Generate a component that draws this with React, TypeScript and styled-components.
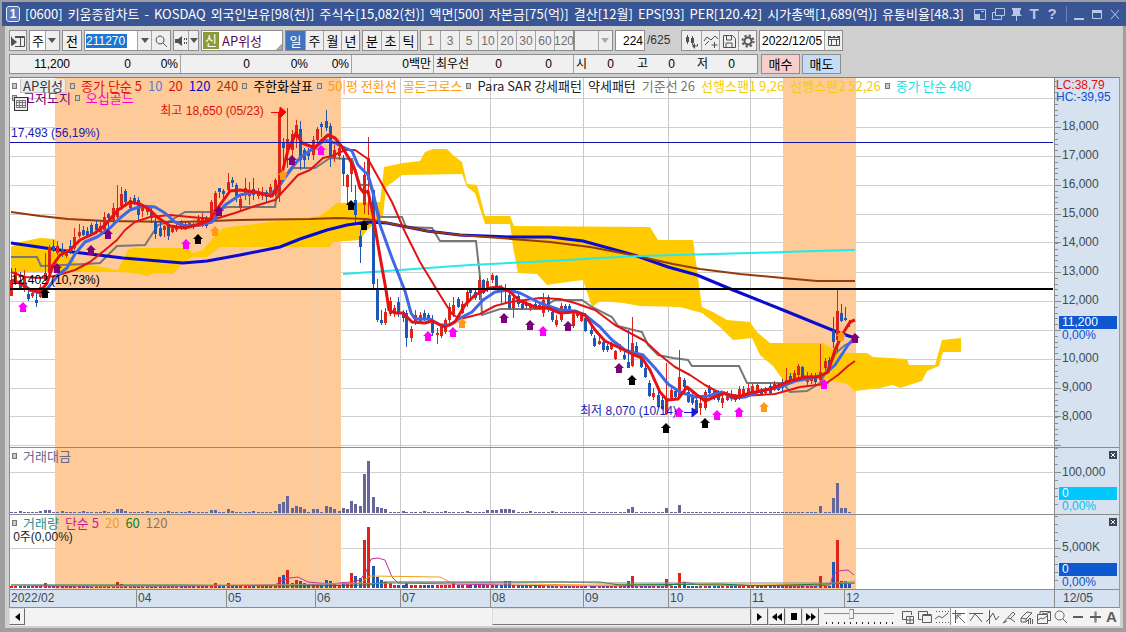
import React from "react";
import styled, { createGlobalStyle } from "styled-components";

const NUMERIC = `"Liberation Sans", "Noto Sans CJK KR", sans-serif`;

const Global = createGlobalStyle`
  * { box-sizing: border-box; }
  body { margin: 0; background: #9f9f9f; }
  body, button, input, select {
    font-family: "Noto Sans CJK KR", sans-serif;
    font-size: 13px;
    line-height: 16px;
    color: #000;
  }
  button, input, select { margin: 0; padding: 0; border: 0; border-radius: 0; background: none; outline: none; }
`;

/* ---------- window frame ---------- */
const Window = styled.main`
  min-width: 1100px;
  padding-top: 2px;
  background: #9f9f9f;
`;
const TitleBar = styled.header`
  display: flex;
  align-items: center;
  height: 24px;
  margin-left: 2px;
  padding: 0 2px 0 4px;
  background: #3a5594;
  color: #fff;
`;
const WindowNumber = styled.span`
  width: 14px;
  height: 16px;
  margin-right: 5px;
  border: 1px solid #e8edf8;
  border-radius: 3px;
  background: #5d78b4;
  font: bold 12px/14px "Liberation Sans", sans-serif;
  text-align: center;
`;
const Title = styled.h1`
  display: flex;
  flex: 1;
  gap: 5px;
  margin: 0;
  font-size: 13px;
  font-weight: normal;
  line-height: 20px;
  white-space: nowrap;
`;
const TitleButton = styled.button`
  display: flex;
  align-items: center;
  justify-content: center;
  width: 18px;
  height: 20px;
  color: #b9c6e6;
  font: bold 15px/20px "Liberation Sans", sans-serif;
`;
const TitleDivider = styled.span`
  width: 1px;
  height: 16px;
  margin: 0 3px 0 5px;
  background: #7086b8;
`;
const Body = styled.div`
  margin: 0 3px 4px 5px;
  padding: 4px 3px 2px 4px;
  background: #cfcfcf;
`;

/* ---------- toolbar ---------- */
const Toolbar = styled.div`
  display: flex;
  gap: 2px;
  height: 22px;
`;
const Group = styled.div<{ $joined?: boolean }>`
  display: flex;
  height: 21px;
  margin-right: ${(p) => (p.$joined ? -2 : 0)}px;
  border: 1px solid #8e8e8e;
  background: #efefef;
`;
const ToolButton = styled.button<{ $w: number; $active?: boolean; $muted?: boolean }>`
  display: flex;
  align-items: center;
  justify-content: center;
  width: ${(p) => p.$w}px;
  height: 19px;
  background: ${(p) => (p.$active ? "#3f74c0" : "#efefef")};
  color: ${(p) => (p.$active ? "#fff" : p.$muted ? "#707070" : "#000")};
  ${(p) => (p.$muted ? `font-family: ${NUMERIC}; font-size: 12px;` : "")}
  & + &, input + &, label + & { border-left: 1px solid #a4a4a4; }
  svg { flex: none; color: #505050; }
`;
const Picker = styled.label<{ $w: number; $plain?: boolean }>`
  position: relative;
  width: ${(p) => p.$w}px;
  background: linear-gradient(to left, #efefef 13px, #a4a4a4 13px, #a4a4a4 14px, ${(p) => (p.$plain ? "#efefef" : "#fff")} 14px);
  select { width: 100%; height: 19px; padding-left: 2px; appearance: none; }
  svg { position: absolute; right: 3px; top: 7px; pointer-events: none; }
`;
const Field = styled.input<{ $w: number; $right?: boolean }>`
  width: ${(p) => p.$w}px;
  height: 19px;
  padding: 0 1px 0 2px;
  background: #fff;
  font-family: ${NUMERIC};
  font-size: 12px;
  text-align: ${(p) => (p.$right ? "right" : "left")};
`;
const CodeBox = styled.label`
  display: flex;
  align-items: center;
  width: 52px;
  padding-left: 1px;
  background: #fff;
  input { width: 41px; height: 14px; background: #1a78d2; color: #fff; font-family: ${NUMERIC}; font-size: 12px; }
`;
const StockName = styled.div`
  display: flex;
  align-items: center;
  width: 80px;
  gap: 3px;
  padding-left: 1px;
  color: #5c0a4c;
  background: linear-gradient(135deg, transparent 0 93%, #a8a8a8 93%) #fff;
`;
const NewBadge = styled.span`
  width: 16px;
  height: 17px;
  background: #8e9a35;
  color: #fff;
  text-align: center;
`;
const CountTotal = styled.span`
  width: 32px;
  color: #333;
  font-family: ${NUMERIC};
  font-size: 12px;
  line-height: 21px;
`;

/* ---------- quote strip ---------- */
const QuoteRow = styled.div`
  display: flex;
  gap: 3px;
  height: 24px;
  padding-top: 2px;
`;
const Quote = styled.div`
  display: flex;
  height: 20px;
  border: 1px solid #8e8e8e;
  background: #f0f0f0;
`;
const QuoteCell = styled.span<{ $w: number; $line?: boolean; $left?: boolean }>`
  width: ${(p) => p.$w}px;
  padding: 0 2px;
  border-right: ${(p) => (p.$line ? "1px solid #a4a4a4" : "0")};
  font-family: ${NUMERIC};
  font-size: 12px;
  line-height: 18px;
  text-align: ${(p) => (p.$left ? "left" : "right")};
  white-space: nowrap;
`;
const OrderButton = styled.button<{ $bg: string }>`
  width: 39px;
  height: 20px;
  margin-right: -1px;
  border: 1px solid #8e8e8e;
  background: ${(p) => p.$bg};
`;

/* ---------- chart ---------- */
const ChartBox = styled.section`
  margin-top: 1px;
  border-top: 1px solid #808080;
  border-right: 1px solid #9a9a9a;
  background: #fff;
`;
const Panel = styled.div<{ $h: number }>`
  display: flex;
  height: ${(p) => p.$h}px;
  & + & { border-top: 1px solid #8c8c8c; }
`;
const Plot = styled.div`
  position: relative;
  flex: 1;
  min-width: 0;
  border-left: 1px solid #8c8c8c;
`;
const Canvas = styled.svg`
  display: block;
  width: 100%;
  height: 100%;
`;
const Axis = styled.div`
  position: relative;
  width: 65px;
  border-left: 1px solid #8c8c8c;
  background: #d6e2ef;
  color: #3f4a55;
  font-family: ${NUMERIC};
  font-size: 12px;
`;
const Ticks = styled.svg`
  position: absolute;
  left: 0;
  top: 0;
`;
const AxisRow = styled.div<{ $h: number; $drop?: number }>`
  display: flex;
  flex-direction: column;
  justify-content: center;
  height: ${(p) => p.$h}px;
  padding: ${(p) => p.$drop ?? 0}px 2px 0 7px;
`;
const AxisNote = styled.div<{ $c: string }>`
  height: 12px;
  color: ${(p) => p.$c};
  line-height: 12px;
`;
const AxisTop = styled.div`
  height: 33px;
  padding: 1px 0 0 1px;
`;
const Badge = styled.div<{ $bg: string }>`
  height: 13px;
  margin-left: -3px;
  padding-left: 3px;
  background: ${(p) => p.$bg};
  color: #fff;
  line-height: 13px;
`;
const PanelClose = styled.button`
  display: flex;
  align-items: center;
  justify-content: center;
  width: 8px;
  height: 8px;
  margin: 3px 2px 0 auto;
  background: #3d4650;
`;
const Legend = styled.div<{ $top: number }>`
  position: absolute;
  left: 4px;
  top: ${(p) => p.$top}px;
  display: flex;
  align-items: center;
  gap: 6px;
  height: 12px;
  line-height: 12px;
  white-space: pre;
`;
const Marker = styled.i`
  width: 5px;
  height: 6px;
  margin-left: -2px;
  border: 1px solid #777;
  background: #c8c8c8;
`;
const Name = styled.span<{ $c: string }>`
  color: ${(p) => p.$c};
`;
const StockChip = styled.button`
  height: 14px;
  margin: 0 0 0 -3px;
  padding: 0 2px;
  border: 1px solid #c4c4c4;
  border-top: 0;
  background: #ebebeb;
  color: #333;
  line-height: 12px;
`;
const GridButton = styled.button`
  position: absolute;
  left: 4px;
  top: 19px;
  width: 14px;
  height: 14px;
  border: 1px solid #333;
  background: #eee;
  svg { display: block; }
`;
const Note = styled.span<{ $x: number; $y: number; $c: string }>`
  position: absolute;
  left: ${(p) => p.$x}%;
  top: ${(p) => p.$y}px;
  color: ${(p) => p.$c};
  font-family: ${NUMERIC};
  font-size: 12px;
  line-height: 14px;
  white-space: pre;
`;
const TimeAxis = styled.div`
  display: flex;
  height: 19px;
  border-top: 1px solid #8c8c8c;
  border-bottom: 1px solid #8c8c8c;
  border-left: 1px solid #8c8c8c;
  background: #d6e2ef;
  color: #3f4a55;
  font-family: ${NUMERIC};
  font-size: 12px;
  line-height: 16px;
`;
const Months = styled.div`
  display: grid;
  flex: 1;
  grid-template-columns: 126fr 90fr 89fr 85fr 90fr 93fr 85fr 82fr 94fr 210fr;
`;
const Month = styled.span`
  padding-left: 1px;
  & + & { border-left: 1px solid #8c8c8c; }
`;
const LastDay = styled.span`
  width: 65px;
  padding-left: 8px;
  border-left: 1px solid #8c8c8c;
`;

/* ---------- scroll and drawing tools ---------- */
const BottomBar = styled.div`
  display: flex;
  height: 18px;
  background: #f3f3f3;
`;
const Track = styled.div`
  display: grid;
  flex: 1;
  grid-template-columns: 466fr 259fr;
`;
const Thumb = styled.div`
  grid-column: 2;
  height: 17px;
  border: 1px solid #777;
  border-top-color: #ddd;
  border-left-color: #ddd;
  background: #efefef;
`;
const StepButton = styled.button<{ $w: number }>`
  display: flex;
  align-items: center;
  justify-content: center;
  width: ${(p) => p.$w}px;
  height: 17px;
  border: 1px solid #6c6c6c;
  border-top-color: #ddd;
  border-left-color: #ddd;
  background: #f3f3f3;
`;
const Zoomer = styled.label`
  width: 70px;
  margin: 0 5px 0 5px;
  background: repeating-linear-gradient(to right, #222 0 1px, transparent 1px 6px) 2px 14px / 68px 2px no-repeat;
  input { display: block; width: 70px; height: 12px; appearance: none; background: linear-gradient(#888, #888) 0 5px / 100% 1px no-repeat; }
  input::-webkit-slider-thumb { appearance: none; width: 5px; height: 10px; border: 1px solid #888; border-left-color: #ccc; background: #f3f3f3; }
`;
const DrawButton = styled.button<{ $on?: boolean }>`
  display: flex;
  align-items: center;
  justify-content: center;
  width: 17px;
  height: 17px;
  color: #5d5d5d;
  background: ${(p) => (p.$on ? "#fff" : "transparent")};
  border-left: ${(p) => (p.$on ? "1px solid #999" : "0")};
  font: bold 15px/17px "Liberation Sans", sans-serif;
`;

/* ---------- data ---------- */
/* x, high, body top, body bottom, low, direction */
const CANDLES = `11 268 280 296 296 r;15 268 272 283 285 r;20 272 280 288 290 b;24 270 276 290 292 r;28 288 294 299 301 b;32 290 293 296 298 r;36 290 300 303 307 b;40 284 287 297 298 r;
45 253 273 280 281 r;49 245 247 273 275 r;53 240 246 250 252 b;57 241 246 253 255 r;62 243 249 254 257 b;66 250 252 256 258 r;70 240 246 252 254 b;74 228 237 248 250 r;79 224 232 236 238 r;
83 226 230 235 236 b;87 227 231 236 237 b;91 223 225 234 236 b;96 220 224 230 234 b;100 222 226 232 234 r;104 212 217 230 232 r;108 213 214 218 228 b;113 203 208 220 224 r;117 185 208 217 222 r;
121 187 194 206 210 r;125 189 191 202 207 b;130 197 200 208 210 r;134 195 198 203 205 b;138 197 200 215 222 b;142 204 206 211 217 r;147 205 207 212 215 r;151 208 212 218 223 b;155 215 222 234 239 b;
160 222 228 236 237 b;164 225 226 230 237 r;168 222 226 236 240 b;172 226 228 232 233 r;176 224 226 230 232 r;181 220 223 228 230 b;185 221 224 228 230 b;189 221 223 227 228 r;193 223 225 227 229 b;
198 215 219 226 227 r;202 213 217 226 227 r;206 216 219 226 228 b;211 200 202 220 222 r;215 191 193 215 217 r;219 188 188 192 198 b;223 189 191 194 198 b;228 173 182 190 192 r;232 177 180 183 187 b;
236 183 185 196 202 b;240 195 199 208 211 r;245 178 188 193 200 r;249 182 190 196 205 r;253 178 189 195 200 b;258 188 191 196 199 r;262 187 192 196 200 r;266 190 192 197 202 b;270 184 187 195 198 r;
275 178 180 194 196 r;279 110 112 196 202 r;283 138 143 148 170 b;287 108 139 150 168 r;292 130 134 150 165 r;296 120 125 137 148 r;300 121 129 160 170 b;304 148 150 160 168 b;308 148 151 156 160 b;
313 136 140 155 160 r;317 127 129 140 143 r;321 122 124 127 137 b;326 110 121 128 131 b;330 123 126 157 167 b;334 145 150 158 162 r;339 145 148 156 160 r;343 155 158 174 186 b;347 174 175 187 204 r;
351 160 163 174 192 r;355 185 200 215 222 b;360 230 236 247 263 b;364 162 175 205 214 r;368 137 158 180 215 r;373 190 190 284 288 b;377 279 289 320 322 b;381 310 320 323 325 b;385 308 312 323 325 r;
390 297 301 314 316 r;394 305 308 314 317 r;398 297 302 313 317 b;403 310 312 318 322 b;406 310 313 338 347 b;411 326 329 338 342 r;415 310 315 322 325 r;420 312 315 321 323 r;424 310 313 319 321 b;
428 313 315 319 322 b;432 315 323 333 336 b;437 328 333 335 344 r;441 324 326 336 338 r;445 318 320 332 334 r;449 303 307 320 323 r;453 297 305 315 317 r;458 297 299 307 308 b;462 301 304 313 314 r;
467 288 292 302 307 r;470 288 290 293 300 b;475 290 292 298 300 b;479 276 280 292 300 r;483 279 280 293 294 b;487 278 281 290 292 r;492 273 275 280 283 r;496 275 276 286 290 b;501 285 288 292 303 b;
505 284 288 292 303 b;509 291 295 308 310 b;513 293 298 308 318 r;518 292 296 304 307 b;522 302 304 308 310 b;526 301 303 306 308 b;530 303 304 308 311 r;535 301 304 308 309 b;539 303 305 309 310 r;
543 293 300 313 317 r;548 295 297 310 312 b;552 309 312 320 322 b;556 315 320 325 327 r;561 303 306 320 322 r;565 304 306 309 312 b;569 304 306 309 312 b;573 312 314 326 328 r;577 310 312 316 318 r;
581 313 315 321 322 r;585 313 318 331 332 b;591 325 330 334 336 b;594 335 338 346 347 b;599 337 341 344 345 r;603 340 342 350 352 b;607 344 346 350 352 b;611 342 344 349 350 r;615 350 351 359 360 r;
620 344 346 350 352 r;624 348 355 359 360 b;628 330 362 368 368 b;632 317 343 366 367 r;636 342 346 352 356 b;641 355 358 367 368 b;645 363 368 377 378 b;649 380 383 396 397 b;653 388 393 397 400 r;
658 388 395 407 408 b;662 395 400 409 410 b;666 363 398 414 415 r;671 387 390 398 400 r;675 388 391 397 400 b;679 350 377 396 398 r;684 378 380 387 393 b;688 387 392 402 403 b;692 390 397 403 405 b;
696 397 400 412 412 b;700 398 403 408 415 r;705 390 392 408 410 r;709 385 387 393 395 b;714 389 391 398 400 b;718 390 392 400 402 b;722 395 398 403 408 r;727 391 394 400 401 r;731 390 394 399 401 b;
735 394 396 400 402 b;739 386 389 399 400 r;743 386 389 395 397 r;748 384 388 394 395 r;752 384 386 392 393 r;757 383 385 391 393 r;761 388 390 394 395 b;765 387 389 393 395 r;770 383 386 393 395 b;
774 381 384 390 391 r;778 383 386 390 391 b;782 379 383 388 392 b;786 368 380 385 386 r;790 373 376 381 383 b;794 370 373 379 380 r;798 364 366 375 378 r;802 366 367 378 379 b;807 372 377 382 385 r;
811 373 375 381 384 r;815 373 376 382 385 b;820 344 372 380 382 r;825 358 361 368 370 r;829 357 360 368 370 b;833 317 331 342 348 b;837 290 311 340 352 r;841 304 313 321 322 b;845 307 318 320 321 b;849 320 323 324 327 b`
  .replace(/\n/g, "")
  .split(";")
  .map((row) => {
    const [x, high, top, bottom, low, dir] = row.split(" ");
    return { x: +x, high: +high, top: +top, bottom: +bottom, low: +low, color: dir === "r" ? "#dc2418" : "#1e58b4" };
  });

const CLOUD =
  "11,247 20,242 40,238 55,239 63,252 77,263 92,265 118,270 128,250 133,248 187,248 193,253 203,250 212,239 223,228 277,221 320,216 337,203 380,202 384,167 403,163 420,161 425,152 433,149 447,149 453,155 462,162 467,184 477,185 485,216 510,216 514,226 650,227 658,240 693,240 702,307 713,312 727,320 750,322 757,332 770,343 823,343 840,353 867,353 873,357 907,359 909,365 935,365 942,340 961,338 961,352 943,352 939,366 927,371 922,381 900,388 893,385 880,388 855,391 847,384 820,378 783,380 773,366 760,355 752,338 733,340 720,327 702,313 680,307 640,306 623,303 600,301 592,307 583,280 560,283 547,285 537,274 518,273 513,247 510,224 485,224 475,193 467,187 462,174 402,175 393,182 386,187 383,217 367,230 360,240 333,242 330,247 220,247 207,257 192,257 183,263 173,274 153,273 148,276 133,273 118,272 11,272";

const LINES = [
  { color: "#777", width: 2, points: "11,257 37,257 41,266 85,264 100,263 108,255 117,246 145,245 158,225 168,222 185,212 210,212 218,209 228,207 275,207 278,187 293,168 315,168 330,158 352,159 360,185 370,185 380,217 402,217 406,227 432,228 440,241 476,241 480,277 482,315 500,309 545,309 550,303 555,300 582,300 592,307 612,317 618,326 642,332 648,345 658,355 673,358 688,360 692,366 739,366 747,383 783,383 790,392 807,391 820,383 836,353 845,345 855,341" },
  { color: "#0b0bd0", width: 3, points: "11,243 73,252 123,258 183,263 207,261 240,255 280,247 300,239 327,230 347,225 367,222 387,223 407,227 427,231 460,235 513,237 550,237 583,241 623,252 637,256 668,267 697,275 733,290 783,310 837,332 855,338" },
  { color: "#963a0a", width: 2, points: "11,212 40,216 68,219 105,221 180,222 240,220 310,219 337,218 367,219 383,222 407,227 427,231 460,235 500,238 550,242 590,247 637,256 673,264 700,269 740,274 783,278 817,281 855,281" },
  { color: "#25e8ec", width: 2, points: "343,274 400,270 470,265 550,261 600,258 640,256 750,253 815,251 855,250" },
  { color: "#e01414", width: 2, points: "11,272 25,277 40,278 55,276 75,270 90,262 105,250 117,240 125,230 135,222 150,217 170,215 190,217 215,219 235,213 255,206 275,200 287,187 298,175 310,170 323,158 332,156 345,150 355,150 368,159 378,177 392,202 405,232 420,262 440,295 452,314 460,319 480,314 495,306 510,302 540,298 560,299 575,303 595,310 615,325 630,333 645,341 660,355 675,367 690,375 705,385 720,393 740,396 775,394 800,387 825,384 838,375 848,366 855,361" },
  { color: "#4068e6", width: 3, points: "20,282 30,290 40,293 48,288 58,275 67,268 75,254 85,242 97,237 110,228 120,218 130,210 142,206 155,207 165,213 175,222 185,226 200,225 212,222 225,205 240,195 255,192 270,195 280,185 290,170 300,158 315,147 325,140 335,143 343,147 352,151 358,165 368,175 373,192 380,225 392,258 405,291 411,313 415,319 430,319 440,325 450,325 460,318 472,312 483,300 495,292 508,290 520,293 540,303 560,310 575,311 585,315 600,327 612,340 625,350 635,353 643,355 655,368 668,384 680,392 695,397 708,396 722,392 732,398 745,397 760,391 780,387 795,381 812,378 825,374 835,365 848,345 855,337" },
  { color: "#e81010", width: 3, points: "11,280 20,283 30,290 40,292 47,283 53,265 60,255 70,250 80,240 95,233 105,225 118,210 130,202 140,204 150,210 157,217 170,226 185,228 200,224 210,220 220,205 230,191 240,190 255,192 272,196 279,185 288,150 296,133 302,143 315,148 321,141 328,135 335,138 342,147 350,160 355,170 360,188 364,193 368,191 373,215 378,245 386,290 389,310 395,313 403,313 412,322 425,323 432,321 445,327 455,322 465,305 475,295 490,288 500,287 510,292 520,301 535,307 548,308 560,313 575,312 585,315 595,330 605,341 620,348 632,354 642,358 650,370 660,392 667,400 678,399 687,387 697,395 705,401 712,398 725,393 735,398 750,393 770,389 790,381 805,377 818,377 828,372 835,350 842,335 850,322 855,320" },
];

const SIGNALS: [string, [number, number][]][] = [
  ["#ff00ff", [[23, 307], [186, 244], [321, 150], [428, 336], [453, 332], [543, 331], [679, 412], [717, 415], [739, 412], [824, 384]]],
  ["#7d007d", [[57, 268], [91, 250], [108, 234], [219, 211], [292, 160], [504, 318], [530, 325], [568, 326], [619, 368], [855, 338]]],
  ["#000", [[45, 293], [198, 239], [351, 205], [364, 225], [632, 380], [666, 428], [705, 423]]],
  ["#ff9a14", [[215, 231], [283, 175], [462, 323], [764, 407], [841, 336]]],
];

const MONTH_LINES = [136, 226, 315, 400, 490, 583, 668, 750, 844];
const MONTHS = ["2022/02", "04", "05", "06", "07", "08", "09", "10", "11", "12"];
const PRICES = ["18,000", "17,000", "16,000", "15,000", "14,000", "13,000", "12,000", "", "10,000", "9,000", "8,000"];

const TITLE = "[0600] 키움종합차트 - KOSDAQ 외국인보유[98(천)] 주식수[15,082(천)] 액면[500] 자본금[75(억)] 결산[12월] EPS[93] PER[120.42] 시가총액[1,689(억)] 유통비율[48.3]".split(" ");

const MONEY: Record<number, number> = { 45: 3, 49: 3, 117: 4, 121: 4, 211: 3, 215: 3, 228: 4, 279: 9, 283: 11, 287: 17, 292: 5, 296: 7, 300: 6, 304: 4, 313: 4, 317: 4, 326: 7, 330: 6, 334: 4, 343: 5, 347: 4, 351: 12, 355: 9, 360: 7, 364: 39, 368: 52, 373: 16, 377: 6, 381: 5, 385: 4, 487: 3, 492: 3, 496: 3, 501: 4, 505: 4, 509: 4, 513: 3, 628: 4, 632: 6, 666: 5, 679: 8, 820: 7, 833: 15, 837: 30, 841: 5, 845: 5 };
const VOLUME: Record<number, number> = { 45: 5, 117: 6, 121: 4, 215: 5, 228: 5, 279: 11, 283: 13, 287: 18, 292: 5, 296: 8, 300: 7, 304: 5, 326: 8, 330: 7, 334: 5, 343: 6, 347: 5, 351: 15, 355: 12, 360: 10, 364: 48, 368: 61, 373: 22, 377: 11, 381: 8, 385: 6, 390: 5, 406: 5, 453: 6, 505: 7, 509: 7, 628: 7, 632: 12, 666: 9, 679: 15, 684: 6, 820: 12, 833: 26, 837: 48, 841: 7, 845: 7, 849: 5 };
const VOLUME_LINES = [
  { color: "#c030a0", points: "31,586 180,586 275,585 281,581 290,578 298,577 308,582 330,584 350,582 360,580 366,572 371,559 378,558 385,560 392,577 398,583 450,584 560,586 668,586 684,582 700,585 815,586 830,585 833,575 838,571 848,570 854,575" },
  { color: "#f0a020", points: "90,586 275,585 360,583 370,576 440,577 452,583 590,585 668,584 750,585 830,584 855,581" },
  { color: "#108040", points: "11,585 180,585 300,586 370,585 385,582 600,582 620,585 720,584 760,586 855,583" },
  { color: "#888", points: "11,585 140,586 280,585 400,583 560,582 600,583 855,583" },
];

/* ---------- parts ---------- */
const Caret = ({ color = "#555" }: { color?: string }) => (
  <svg width="8" height="5" viewBox="0 0 8 5"><path d="M0 0h8L4 5z" fill={color} /></svg>
);

function Backdrop({ rows, top, bottom }: { rows: number[]; top: number; bottom: number }) {
  return (
    <g shapeRendering="crispEdges">
      {rows.map((y) => <rect key={y} x="9" y={y} width="1044" height="1" fill="#d0d0d0" />)}
      {MONTH_LINES.map((x) => <rect key={x} x={x} y={top} width="1" height={bottom - top} fill="#c8c8cc" />)}
      <rect x="55" y={top} width="286" height={bottom - top} fill="#fecb98" />
      <rect x="783" y={top} width="73" height={bottom - top} fill="#fecb98" />
      {[136, 226, 315, 844].map((x) => <rect key={x} x={x - 1} y={top} width="3" height={bottom - top} fill="#f5cba8" />)}
    </g>
  );
}

function PriceCanvas() {
  return (
    <Canvas viewBox="10 78 1044 369" preserveAspectRatio="none">
      <Backdrop rows={[98, 127, 156, 185, 214, 242, 272, 301, 330, 359, 388, 416, 445]} top={78} bottom={447} />
      <polygon points={CLOUD} fill="#ffcb00" />
      {LINES.slice(0, 4).map((l, i) => <polyline key={i} points={l.points} fill="none" stroke={l.color} strokeWidth={l.width} />)}
      <g shapeRendering="crispEdges">
        {CANDLES.map((c) => (
          <g key={c.x} fill={c.color}>
            <rect x={c.x} y={c.high} width="1" height={c.low - c.high} />
            <rect x={c.x - 1} y={c.top} width="3" height={c.bottom - c.top} />
          </g>
        ))}
      </g>
      {LINES.slice(4).map((l, i) => <polyline key={i} points={l.points} fill="none" stroke={l.color} strokeWidth={l.width} strokeLinejoin="round" />)}
      <g shapeRendering="crispEdges">
        <rect x="9" y="142" width="1044" height="1" fill="#1212a8" />
        <rect x="9" y="288" width="1044" height="2" fill="#000" />
      </g>
      {SIGNALS.map(([color, spots]) =>
        spots.map(([x, y]) => <path key={`${x}-${y}`} d={`M${x} ${y - 5}l5 5h-2v5h-6v-5h-2z`} fill={color} />)
      )}
      <path d="M271 112.500h9M280 107l6 5-6 6z" stroke="#f00" fill="#f00" />
      <path d="M684 412.500h8M692 408l6 4-6 5z" stroke="#1414e0" fill="#1414e0" />
    </Canvas>
  );
}

function MoneyCanvas() {
  return (
    <Canvas viewBox="10 448 1044 66" preserveAspectRatio="none">
      <Backdrop rows={[472]} top={448} bottom={514} />
      <g shapeRendering="crispEdges" fill="#66669a">
        {CANDLES.map((c, i) => {
          const h = MONEY[c.x] ?? (i % 5 === 2 && c.x < 560 ? 2 : 1);
          return <rect key={c.x} x={c.x - 1} y={513 - h} width="3" height={h} />;
        })}
      </g>
    </Canvas>
  );
}

function VolumeCanvas() {
  return (
    <Canvas viewBox="10 515 1044 74" preserveAspectRatio="none">
      <Backdrop rows={[548]} top={515} bottom={589} />
      <g shapeRendering="crispEdges">
        {CANDLES.map((c) => {
          const h = VOLUME[c.x] ?? (c.x > 280 && c.x < 540 ? 3 : 2);
          return <rect key={c.x} x={c.x - 1} y={588 - h} width="3" height={h} fill={c.color} />;
        })}
      </g>
      {VOLUME_LINES.map((l, i) => <polyline key={i} points={l.points} fill="none" stroke={l.color} />)}
    </Canvas>
  );
}

function AxisTicks({ height, major, step }: { height: number; major: number[]; step: number }) {
  const minor = Array.from({ length: Math.floor(height / step) }, (_, i) => Math.round((major[0] % step) + i * step));
  return (
    <Ticks width="8" height={height} shapeRendering="crispEdges">
      {minor.map((y) => <rect key={y} x="0" y={y} width="3" height="1" fill="#8c8c8c" />)}
      {major.map((y) => <rect key={`m${y}`} x="0" y={y} width="6" height="1" fill="#8c8c8c" />)}
    </Ticks>
  );
}

const CloseMark = () => (
  <svg width="6" height="6" viewBox="0 0 6 6"><path d="M1 1l4 4M5 1L1 5" stroke="#fff" /></svg>
);

const Glyph = ({ d, fill }: { d: string; fill?: string }) => (
  <svg width="16" height="16" viewBox="0 0 16 16" fill="none" stroke="currentColor">
    <path d={d} />
    {fill && <path d={fill} fill="currentColor" stroke="none" />}
  </svg>
);

const DRAW_TOOLS: { label: string; d: string; fill?: string; on?: boolean }[] = [
  { label: "새 창", d: "M6 10.500H2.500V2.500H11.500V6M6.500 7.500h7v7h-7zM10 7.500v7M6.500 11h7" },
  { label: "창 겹치기", d: "M4.500 10.500h-3v-8h9v3M5.500 6.500h9v7h-9zM5.500 5.500h9" },
  { label: "구간 보기", d: "M2 2.500h1m2 0h1m2 0h1m2 0h1m2 0h1M2 13.500h1m2 0h1m2 0h1m2 0h1m2 0h1M1 10l4-3 3 2 6-5" },
  { label: "십자선", d: "M1 4.500h13M4.500 1v13M14 14L6 6M6 10V6h4", on: true },
  { label: "추세선", d: "M1 4.500h14M2 12l5-7 4 4 3 4" },
  { label: "수직선", d: "M4.500 1v14M1 13l3-3 4-6 3 7 3-4" },
  { label: "그리기", d: "M1 14L11 3l2 2-5 5M6 9l3 1 4 3M1 14l4-2" },
  { label: "지우기", d: "M2 9l6-6 5 1-6 6zM2 9v4h5V10M7 13l4-4", fill: "M9 10h1v5H9zM11 9h1v6h-1zM13 10h1v5h-1z" },
  { label: "비교 차트", d: "M1.500 5.500h10v9h-10zM4 5V2.500h10.500v9H12M2 11l3-2 2 1 4-3M6 4l3 1 5-2" },
  { label: "돋보기", d: "M6.500 2a4.500 4.500 0 1 0 .1 0zM10 10l4 4" },
  { label: "축소", d: "M3 7.500h10M3 8.500h10" },
  { label: "확대", d: "M3 7.500h11M3 8.500h11M8 2.500v11M9 2.500v11" },
];

export default function App() {
  return (
    <Window>
      <Global />
      <TitleBar>
        <WindowNumber>1</WindowNumber>
        <Title>{TITLE.map((t) => <span key={t}>{t}</span>)}</Title>
        <TitleButton aria-label="작은 창"><Glyph d="M2.500 3.500h11v10h-11z" fill="M3 8h5v5H3zM9 5h3v1H9z" /></TitleButton>
        <TitleButton aria-label="창 복사"><Glyph d="M5.500 2.500h9v7h-9zM5 6.500H2.500v7h9V10" /></TitleButton>
        <TitleButton aria-label="고정"><Glyph d="M8.500 9v6" fill="M4 2h9v2h-1v4l2 2H3l2-2V4H4z" /></TitleButton>
        <TitleButton>T</TitleButton>
        <TitleButton>?</TitleButton>
        <TitleDivider />
        <TitleButton aria-label="최소화"><Glyph d="" fill="M3 12h10v2H3z" /></TitleButton>
        <TitleButton aria-label="최대화"><Glyph d="M3.500 4.500h9v8h-9z" fill="M3 4h10v3H3z" /></TitleButton>
        <TitleButton aria-label="닫기"><Glyph d="M4 4l8 9M12 4l-8 9" /></TitleButton>
      </TitleBar>

      <Body>
        <Toolbar>
          <Group>
            <ToolButton $w={16} aria-label="패널 열기"><Glyph d="M1.500 3.500v9M5 3.500h9.500v10H5M10.500 4v9M5 4.500h9" fill="M2 5l5 4-5 4z" /></ToolButton>
          </Group>
          <Group>
            <Picker $w={29}>
              <select aria-label="상품"><option>주</option></select>
              <Caret />
            </Picker>
          </Group>
          <Group><ToolButton $w={18}>전</ToolButton></Group>
          <Group>
            <CodeBox><input aria-label="종목코드" defaultValue="211270" /></CodeBox>
            <ToolButton $w={14} aria-label="종목 목록"><Caret /></ToolButton>
            <ToolButton $w={19} aria-label="종목 검색"><Glyph d="M7 3a4 4 0 1 0 .1 0zM10 10l4 4" /></ToolButton>
          </Group>
          <Group>
            <ToolButton $w={14} aria-label="소리"><Glyph d="M11.500 5v2m0 2v2m2-6v2m0 2v2" fill="M2 6h3l4-3v10L5 10H2z" /></ToolButton>
            <ToolButton $w={10} aria-label="소리 설정"><Caret /></ToolButton>
          </Group>
          <Group>
            <StockName><NewBadge>신</NewBadge>AP위성</StockName>
          </Group>
          <Group>
            {["일", "주", "월", "년"].map((t, i) => <ToolButton key={t} $w={i ? 18 : 19} $active={i === 0}>{t}</ToolButton>)}
          </Group>
          <Group>
            {["분", "초", "틱"].map((t) => <ToolButton key={t} $w={18}>{t}</ToolButton>)}
          </Group>
          <Group $joined>
            {["1", "3", "5", "10", "20", "30", "60", "120"].map((t) => <ToolButton key={t} $w={19} $muted>{t}</ToolButton>)}
          </Group>
          <Group>
            <Picker $w={37} $plain>
              <select aria-label="분 간격"><option></option></select>
              <Caret color="#aaa" />
            </Picker>
          </Group>
          <Group><Field $w={28} $right aria-label="표시 개수" defaultValue="224" /></Group>
          <CountTotal>/625</CountTotal>
          <Group>
            <ToolButton $w={19} aria-label="봉 추가"><Glyph d="M3.500 2v9M8.500 3v9M13.500 11v2h-4" fill="M2 4h3v5H2zM7 5h3v5H7zM11 10l-3 3 3 3z" /></ToolButton>
            <ToolButton $w={18} aria-label="지표 추가"><Glyph d="M1 8l3-4 4 3 4-4 3 3M2 12l4-4M11.500 9v6M8.500 12h6" /></ToolButton>
            <ToolButton $w={19} aria-label="저장"><Glyph d="M2.500 2.500h9l3 3v9h-12zM5.500 3v4h5V3M5 14v-4h6v4" /></ToolButton>
            <ToolButton $w={18} aria-label="설정">
              <svg width="14" height="14" viewBox="0 0 14 14" fill="none" stroke="#555">
                <circle cx="7" cy="7" r="3.500" strokeWidth="2" />
                <circle cx="7" cy="7" r="5.500" strokeWidth="2" strokeDasharray="2.200 2.120" />
              </svg>
            </ToolButton>
          </Group>
          <Group>
            <Field $w={64} aria-label="기준일" defaultValue="2022/12/05" />
            <ToolButton $w={18} aria-label="달력"><Glyph d="M2.500 4.500h11v8h-11zM2 6.500h12M5.500 7v6M10.500 7v6" fill="M2 3h3v2H2zM7 3h2v2H7zM11 3h3v2h-3z" /></ToolButton>
          </Group>
        </Toolbar>

        <QuoteRow>
          <Quote>
            <QuoteCell $w={62}>11,200</QuoteCell>
            <QuoteCell $w={61}>0</QuoteCell>
            <QuoteCell $w={48} $line>0%</QuoteCell>
            <QuoteCell $w={71}>0</QuoteCell>
            <QuoteCell $w={58}>0%</QuoteCell>
            <QuoteCell $w={42} $line>0%</QuoteCell>
            <QuoteCell $w={82} $line>0백만</QuoteCell>
            <QuoteCell $w={38} $left>최우선</QuoteCell>
            <QuoteCell $w={32}>0</QuoteCell>
            <QuoteCell $w={50}>0</QuoteCell>
            <QuoteCell $w={20} $line />
            <QuoteCell $w={16} $left>시</QuoteCell>
            <QuoteCell $w={26}>0</QuoteCell>
            <QuoteCell $w={34}>고</QuoteCell>
            <QuoteCell $w={27}>0</QuoteCell>
            <QuoteCell $w={33}>저</QuoteCell>
            <QuoteCell $w={27}>0</QuoteCell>
            <QuoteCell $w={20} />
          </Quote>
          <OrderButton $bg="#f6cfca">매수</OrderButton>
          <OrderButton $bg="#c4dcf6">매도</OrderButton>
        </QuoteRow>

        <ChartBox>
          <Panel $h={369}>
            <Plot>
              <PriceCanvas />
              <Legend $top={2}>
                <Marker />
                <StockChip>AP위성</StockChip>
                <Marker />
                <Name $c="#e01010">종가 단순 5</Name>
                <Name $c="#5a78d8">10</Name>
                <Name $c="#e01010">20</Name>
                <Name $c="#0b0bc0">120</Name>
                <Name $c="#963a0a">240</Name>
                <Marker />
                <Name $c="#000">주한화살표</Name>
                <Marker />
                <Name $c="#ff9a14">50|평 전환선</Name>
                <Name $c="#ff9a14">골든크로스</Name>
                <Marker />
                <Name $c="#222">Para SAR 강세패턴</Name>
                <Name $c="#222">약세패턴</Name>
                <Name $c="#777">기준선 26</Name>
                <Name $c="#f0cc10">선행스팬1 9,26</Name>
                <Name $c="#f0cc10">선행스팬2 52,26</Name>
                <Marker />
                <Name $c="#20e0e6">종가 단순 480</Name>
              </Legend>
              <Legend $top={14}>
                <Marker />
                <Name $c="#7d007d">고저도지</Name>
                <Marker />
                <Name $c="#ff00c8">오십골드</Name>
              </Legend>
              <GridButton aria-label="지표 표">
                <svg width="12" height="12" viewBox="0 0 12 12"><path d="M1.500 2.500h9v7h-9zM1 4.500h10M1 7.500h10M4.500 2v8M7.500 2v8" fill="none" stroke="#777" /></svg>
              </GridButton>
              <Note $x={14.4} $y={26} $c="#e01010">최고 18,650 (05/23)</Note>
              <Note $x={0.1} $y={48} $c="#1a1ab0">17,493 (56,19%)</Note>
              <Note $x={0.1} $y={195} $c="#000">12,402 (10,73%)</Note>
              <Note $x={54.6} $y={326} $c="#1a1ab0">최저 8,070 (10/14)</Note>
            </Plot>
            <Axis>
              <AxisTicks height={369} step={5.8} major={[20, 49, 78, 107, 136, 164, 194, 223, 252, 281, 310, 338, 367]} />
              <AxisTop>
                <AxisNote $c="#e01010">LC:38,79</AxisNote>
                <AxisNote $c="#1050d0">HC:-39,95</AxisNote>
              </AxisTop>
              {PRICES.map((p, i) => (
                <AxisRow key={i} $h={29}>
                  {p || (
                    <>
                      <Badge $bg="#1058d0">11,200</Badge>
                      <AxisNote $c="#1050d0">0,00%</AxisNote>
                    </>
                  )}
                </AxisRow>
              ))}
            </Axis>
          </Panel>

          <Panel $h={67}>
            <Plot>
              <MoneyCanvas />
              <Legend $top={2}>
                <Marker />
                <Name $c="#66668e">거래대금</Name>
              </Legend>
            </Plot>
            <Axis>
              <AxisTicks height={66} step={8} major={[24]} />
              <PanelClose aria-label="거래대금 닫기"><CloseMark /></PanelClose>
              <AxisRow $h={25}>100,000</AxisRow>
              <AxisRow $h={30}>
                <Badge $bg="#00c8ff">0</Badge>
                <AxisNote $c="#00c0f4">0,00%</AxisNote>
              </AxisRow>
            </Axis>
          </Panel>

          <Panel $h={75}>
            <Plot>
              <VolumeCanvas />
              <Legend $top={2}>
                <Marker />
                <Name $c="#209090">거래량</Name>
                <Name $c="#d01890">단순 5</Name>
                <Name $c="#f0a020">20</Name>
                <Name $c="#108020">60</Name>
                <Name $c="#857565">120</Name>
              </Legend>
              <Note $x={0.3} $y={15} $c="#222">0주(0,00%)</Note>
            </Plot>
            <Axis>
              <AxisTicks height={74} step={8} major={[33]} />
              <PanelClose aria-label="거래량 닫기"><CloseMark /></PanelClose>
              <AxisRow $h={37} $drop={5}>5,000K</AxisRow>
              <AxisRow $h={25}>
                <Badge $bg="#1058d0">0</Badge>
                <AxisNote $c="#1050d0">0,00%</AxisNote>
              </AxisRow>
            </Axis>
          </Panel>

          <TimeAxis>
            <Months>{MONTHS.map((m) => <Month key={m}>{m}</Month>)}</Months>
            <LastDay>12/05</LastDay>
          </TimeAxis>
        </ChartBox>

        <BottomBar>
          <StepButton $w={16} aria-label="왼쪽으로"><svg width="5" height="8"><path d="M5 0v8L0 4z" /></svg></StepButton>
          <Track><Thumb /></Track>
          <StepButton $w={17} aria-label="오른쪽으로"><svg width="5" height="8"><path d="M0 0v8l5-4z" /></svg></StepButton>
          <StepButton $w={17} aria-label="뒤로"><svg width="10" height="8"><path d="M5 0v8L0 4zM10 0v8L5 4z" /></svg></StepButton>
          <StepButton $w={17} aria-label="정지"><svg width="6" height="7"><path d="M0 0h6v7H0z" /></svg></StepButton>
          <StepButton $w={17} aria-label="앞으로"><svg width="10" height="8"><path d="M0 0v8l5-4zM5 0v8l5-4z" /></svg></StepButton>
          <Zoomer><input type="range" aria-label="차트 배율" defaultValue={38} /></Zoomer>
          {DRAW_TOOLS.map((t) => (
            <DrawButton key={t.label} aria-label={t.label} $on={t.on}><Glyph d={t.d} fill={t.fill} /></DrawButton>
          ))}
          <DrawButton>A</DrawButton>
        </BottomBar>
      </Body>
    </Window>
  );
}
